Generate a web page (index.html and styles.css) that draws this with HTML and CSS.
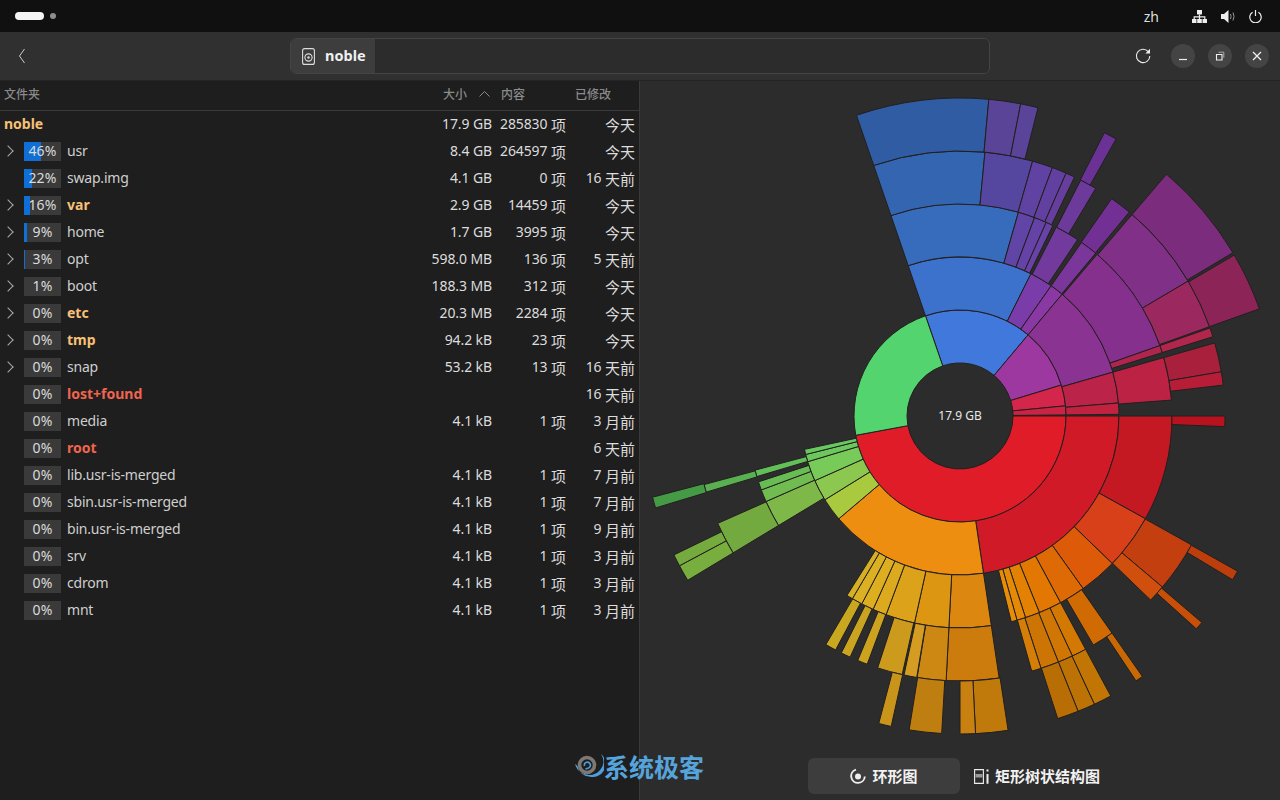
FILE: index.html
```html
<!DOCTYPE html>
<html lang="zh-CN">
<head>
    <meta charset="UTF-8">
    <title>磁盘使用情况分析器</title>
    <link rel="stylesheet" href="styles.css">
</head>
<body>
    <!-- 顶部面板 -->
    <div class="top-bar">
        <div class="workspaces">
            <span class="ws-pill"></span>
            <span class="ws-dot"></span>
        </div>
        <div class="tray">
            <span class="lang">zh</span>
            <svg class="tray-net" width="15" height="13" viewBox="0 0 15 13">
                <path d="M5 0h5v4.5H5zM0 9h4.5v4H0zM5.2 9h4.6v4H5.2zM10.5 9H15v4h-4.5z" fill="#eee"/>
                <path d="M7.5 4.5V9M2.2 9V6.8h10.6V9" fill="none" stroke="#eee" stroke-width="1.2"/>
            </svg>
            <svg class="tray-vol" width="15" height="13" viewBox="0 0 15 13">
                <path d="M0 4h3l4.5-4v13L3 9H0z" fill="#eee"/>
                <path d="M9.5 4q1.2 2.5 0 5M12 2.5q2 4 0 8" fill="none" stroke="#999" stroke-width="1"/>
            </svg>
            <svg class="tray-power" width="13" height="13" viewBox="0 0 13 13">
                <path d="M3.6 2.2a5.7 5.7 0 1 0 5.8 0M6.5 0v6" fill="none" stroke="#eee" stroke-width="1.2"/>
            </svg>
        </div>
    </div>

    <!-- 标题栏 -->
    <div class="header-bar">
        <svg class="back-icon" width="8" height="16" viewBox="0 0 8 16">
            <path d="M6.5 1 1.5 8l5 7" fill="none" stroke="#ccc" stroke-width="1"/>
        </svg>
        <div class="path-bar">
            <div class="path-btn">
                <svg width="13" height="17" viewBox="0 0 13 17">
                    <rect x=".6" y=".6" width="11.8" height="15.8" rx="2" fill="none" stroke="#ddd" stroke-width="1.1"/>
                    <circle cx="6.5" cy="9.5" r="3.6" fill="none" stroke="#ddd" stroke-width="1.1"/>
                    <circle cx="6.5" cy="9.5" r="1.2" fill="#ddd"/>
                </svg>
                <span>noble</span>
            </div>
        </div>
        <div class="header-actions">
            <svg class="refresh-icon" width="16" height="16" viewBox="0 0 16 16">
                <path d="M13.2 3.6A6.7 6.7 0 1 0 14.8 8" fill="none" stroke="#eee" stroke-width="1.1"/>
                <path d="M15 .8v4.6h-4.6z" fill="#eee"/>
            </svg>
            <div class="win-btn">
                <svg width="10" height="10" viewBox="0 0 10 10"><path d="M1 8.5h8" stroke="#eee" stroke-width="1.2"/></svg>
            </div>
            <div class="win-btn">
                <svg width="10" height="10" viewBox="0 0 10 10">
                    <path d="M1.5 3.5h5.5V9H1.5z" fill="none" stroke="#eee" stroke-width="1.1"/>
                    <path d="M3.5 1.2h5.3v5.5" fill="none" stroke="#aaa" stroke-width="1"/>
                </svg>
            </div>
            <div class="win-btn">
                <svg width="10" height="10" viewBox="0 0 10 10"><path d="M1 1l8 8M9 1l-8 8" stroke="#eee" stroke-width="1.3"/></svg>
            </div>
        </div>
    </div>

    <div class="main">
        <!-- 文件夹列表 -->
        <div class="tree-pane">
            <div class="tree-head">
                <div>文件夹</div>
                <div class="head-size">
                    <span>大小</span>
                    <svg width="11" height="6" viewBox="0 0 11 6"><path d="M.5 5.5l5-5 5 5" fill="none" stroke="#8a8a8a"/></svg>
                </div>
                <div class="head-col">内容</div>
                <div class="head-col">已修改</div>
            </div>

            <div class="tree-row">
                <div class="name-cell name-warn root-name">noble</div>
                <div class="num">17.9 GB</div><div class="num">285830 <span class="unit">项</span></div><div class="num"><span class="unit">今天</span></div>
            </div>
            <div class="tree-row">
                <div class="name-cell"><span class="arrow"></span><span class="bar"><span class="fill w46"></span><span class="pct">46%</span></span>usr</div>
                <div class="num">8.4 GB</div><div class="num">264597 <span class="unit">项</span></div><div class="num"><span class="unit">今天</span></div>
            </div>
            <div class="tree-row">
                <div class="name-cell"><span class="no-arrow"></span><span class="bar"><span class="fill w22"></span><span class="pct">22%</span></span>swap.img</div>
                <div class="num">4.1 GB</div><div class="num">0 <span class="unit">项</span></div><div class="num">16 <span class="unit">天前</span></div>
            </div>
            <div class="tree-row">
                <div class="name-cell name-warn"><span class="arrow"></span><span class="bar"><span class="fill w16"></span><span class="pct">16%</span></span>var</div>
                <div class="num">2.9 GB</div><div class="num">14459 <span class="unit">项</span></div><div class="num"><span class="unit">今天</span></div>
            </div>
            <div class="tree-row">
                <div class="name-cell"><span class="arrow"></span><span class="bar"><span class="fill w9"></span><span class="pct">9%</span></span>home</div>
                <div class="num">1.7 GB</div><div class="num">3995 <span class="unit">项</span></div><div class="num"><span class="unit">今天</span></div>
            </div>
            <div class="tree-row">
                <div class="name-cell"><span class="arrow"></span><span class="bar"><span class="fill w3"></span><span class="pct">3%</span></span>opt</div>
                <div class="num">598.0 MB</div><div class="num">136 <span class="unit">项</span></div><div class="num">5 <span class="unit">天前</span></div>
            </div>
            <div class="tree-row">
                <div class="name-cell"><span class="arrow"></span><span class="bar"><span class="pct">1%</span></span>boot</div>
                <div class="num">188.3 MB</div><div class="num">312 <span class="unit">项</span></div><div class="num"><span class="unit">今天</span></div>
            </div>
            <div class="tree-row">
                <div class="name-cell name-warn"><span class="arrow"></span><span class="bar"><span class="pct">0%</span></span>etc</div>
                <div class="num">20.3 MB</div><div class="num">2284 <span class="unit">项</span></div><div class="num"><span class="unit">今天</span></div>
            </div>
            <div class="tree-row">
                <div class="name-cell name-warn"><span class="arrow"></span><span class="bar"><span class="pct">0%</span></span>tmp</div>
                <div class="num">94.2 kB</div><div class="num">23 <span class="unit">项</span></div><div class="num"><span class="unit">今天</span></div>
            </div>
            <div class="tree-row">
                <div class="name-cell"><span class="arrow"></span><span class="bar"><span class="pct">0%</span></span>snap</div>
                <div class="num">53.2 kB</div><div class="num">13 <span class="unit">项</span></div><div class="num">16 <span class="unit">天前</span></div>
            </div>
            <div class="tree-row">
                <div class="name-cell name-error"><span class="no-arrow"></span><span class="bar"><span class="pct">0%</span></span>lost+found</div>
                <div class="num"></div><div class="num"></div><div class="num">16 <span class="unit">天前</span></div>
            </div>
            <div class="tree-row">
                <div class="name-cell"><span class="no-arrow"></span><span class="bar"><span class="pct">0%</span></span>media</div>
                <div class="num">4.1 kB</div><div class="num">1 <span class="unit">项</span></div><div class="num">3 <span class="unit">月前</span></div>
            </div>
            <div class="tree-row">
                <div class="name-cell name-error"><span class="no-arrow"></span><span class="bar"><span class="pct">0%</span></span>root</div>
                <div class="num"></div><div class="num"></div><div class="num">6 <span class="unit">天前</span></div>
            </div>
            <div class="tree-row">
                <div class="name-cell"><span class="no-arrow"></span><span class="bar"><span class="pct">0%</span></span>lib.usr-is-merged</div>
                <div class="num">4.1 kB</div><div class="num">1 <span class="unit">项</span></div><div class="num">7 <span class="unit">月前</span></div>
            </div>
            <div class="tree-row">
                <div class="name-cell"><span class="no-arrow"></span><span class="bar"><span class="pct">0%</span></span>sbin.usr-is-merged</div>
                <div class="num">4.1 kB</div><div class="num">1 <span class="unit">项</span></div><div class="num">7 <span class="unit">月前</span></div>
            </div>
            <div class="tree-row">
                <div class="name-cell"><span class="no-arrow"></span><span class="bar"><span class="pct">0%</span></span>bin.usr-is-merged</div>
                <div class="num">4.1 kB</div><div class="num">1 <span class="unit">项</span></div><div class="num">9 <span class="unit">月前</span></div>
            </div>
            <div class="tree-row">
                <div class="name-cell"><span class="no-arrow"></span><span class="bar"><span class="pct">0%</span></span>srv</div>
                <div class="num">4.1 kB</div><div class="num">1 <span class="unit">项</span></div><div class="num">3 <span class="unit">月前</span></div>
            </div>
            <div class="tree-row">
                <div class="name-cell"><span class="no-arrow"></span><span class="bar"><span class="pct">0%</span></span>cdrom</div>
                <div class="num">4.1 kB</div><div class="num">1 <span class="unit">项</span></div><div class="num">3 <span class="unit">月前</span></div>
            </div>
            <div class="tree-row">
                <div class="name-cell"><span class="no-arrow"></span><span class="bar"><span class="pct">0%</span></span>mnt</div>
                <div class="num">4.1 kB</div><div class="num">1 <span class="unit">项</span></div><div class="num">3 <span class="unit">月前</span></div>
            </div>
        </div>

        <!-- 环形图 -->
        <div class="chart-pane">
            <div class="chart-area">
                <svg id="sunburst" width="640" height="670" viewBox="640 81 640 670"></svg>
                <div class="chart-label">17.9 GB</div>
            </div>
            <div class="view-switch">
                <div class="switch-btn active">
                    <svg width="16" height="17" viewBox="0 0 16 17">
                        <path d="M6 1.6A6.8 6.8 0 1 0 14.8 8.5" fill="none" stroke="#eee" stroke-width="1.9"/>
                        <circle cx="8" cy="8.5" r="3" fill="#eee"/>
                    </svg>
                    <span>环形图</span>
                </div>
                <div class="switch-btn">
                    <svg width="15" height="15" viewBox="0 0 15 15">
                        <path d="M.6.6h8.8v13.8H.6z" fill="none" stroke="#eee" stroke-width="1.1"/>
                        <path d="M1.5 5h7v3.5h-7z" fill="#999"/>
                        <path d="M12.5.6h2v2h-2zM12.5 5h2v9.8h-2z" fill="#eee"/>
                    </svg>
                    <span>矩形树状结构图</span>
                </div>
            </div>
        </div>
    </div>

    <!-- 水印 -->
    <div class="watermark">
        <svg width="30" height="26" viewBox="0 0 30 26">
            <path d="M1 10A14.5 14.5 0 0 0 29.5 8 14.5 14.5 0 0 0 27 0 13 13 0 0 1 15 22.5 12 12 0 0 1 3.5 12Z" fill="#4c9fdc"/>
            <circle cx="13" cy="11" r="7.5" fill="none" stroke="#7f7771" stroke-width="3.6"/>
            <path d="M10.5 12a3 3 0 1 1 4 2L11.5 15" fill="none" stroke="#4c9fdc" stroke-width="1.6"/>
        </svg>
        <span>系统极客</span>
    </div>

    <script src="sunburst.js"></script>
</body>
</html>
```

FILE: styles.css
```css
* {
    box-sizing: border-box;
}

html, body {
    height: 100%;
}

body {
    margin: 0;
    overflow: hidden;
    display: flex;
    flex-direction: column;
    position: relative;
    background: #1e1e1e;
    color: #e6e6e6;
    font-family: "Noto Sans", "Noto Sans CJK SC", sans-serif;
    font-size: 14px;
}

/* 顶部面板 */
.top-bar {
    height: 32px;
    flex: none;
    background: #101010;
    display: flex;
    justify-content: space-between;
    align-items: center;
    padding: 0 18px 0 15px;
}

.workspaces {
    display: flex;
    align-items: center;
    gap: 6px;
}

.ws-pill {
    width: 29px;
    height: 8px;
    border-radius: 4px;
    background: #f5f5f5;
}

.ws-dot {
    width: 6px;
    height: 6px;
    border-radius: 50%;
    background: #8d8d8d;
}

.tray {
    display: flex;
    align-items: center;
}

.lang {
    font-size: 14px;
    color: #ddd;
    margin-right: 33px;
}

.tray-vol {
    margin-left: 14px;
}

.tray-power {
    margin-left: 13px;
}

/* 标题栏 */
.header-bar {
    height: 49px;
    flex: none;
    background: #303030;
    border-bottom: 1px solid #242424;
    display: flex;
    align-items: center;
    padding: 0 11px 0 18px;
    position: relative;
}

.back-icon {
    margin-bottom: 1px;
}

.path-bar {
    width: 700px;
    height: 36px;
    margin-left: 264px;
    background: #2c2c2c;
    border: 1px solid #444;
    border-radius: 6px;
    overflow: hidden;
}

.path-btn {
    width: 85px;
    height: 100%;
    background: #3d3d3d;
    border-right: 1px solid #2a2a2a;
    display: flex;
    align-items: center;
    gap: 10px;
    padding-left: 11px;
    font-weight: 700;
    font-size: 14.5px;
    color: #f0f0f0;
}

.path-btn span {
    padding-bottom: 2px;
}

.header-actions {
    margin-left: auto;
    display: flex;
    align-items: center;
    gap: 13px;
}

.refresh-icon {
    margin-right: 7px;
}

.win-btn {
    width: 24px;
    height: 24px;
    border-radius: 50%;
    background: #444;
    display: flex;
    align-items: center;
    justify-content: center;
}

/* 主体 */
.main {
    flex: 1;
    display: flex;
    min-height: 0;
}

.tree-pane {
    width: 640px;
    flex: none;
    background: #1e1e1e;
    border-right: 1px solid #3a3a3a;
}

.tree-head,
.tree-row {
    display: grid;
    grid-template-columns: 1fr 82px 74px 69px;
    padding-right: 4px;
}

.tree-head {
    height: 30px;
    align-items: center;
    border-bottom: 1px solid #3a3a3a;
    padding-left: 4px;
    padding-bottom: 3px;
    font-size: 12px;
    font-weight: 500;
    color: #8a8a8a;
}

.head-size {
    display: flex;
    align-items: center;
    justify-content: flex-end;
    gap: 12px;
    padding-right: 2px;
}

.head-col {
    padding-left: 9px;
}

.tree-row {
    height: 27px;
    align-items: center;
    font-size: 14px;
}

.num {
    height: 20px;
    line-height: 20px;
    text-align: right;
    color: #dcdcdc;
    white-space: nowrap;
    letter-spacing: -0.1px;
    margin-bottom: 2px;
}

.unit {
    font-size: 15px;
    line-height: 15px;
    letter-spacing: 0;
    vertical-align: -2px;
}

.name-cell {
    display: flex;
    align-items: center;
    color: #cfcfcf;
    letter-spacing: -0.2px;
    padding-bottom: 2px;
}

.root-name {
    padding-left: 4px;
}

.name-warn {
    color: #f8c077;
    font-weight: 700;
    letter-spacing: 0;
}

.name-error {
    color: #f0654f;
    font-weight: 700;
    letter-spacing: 0;
}

.arrow,
.no-arrow {
    width: 24px;
    flex: none;
    height: 10px;
    position: relative;
}

.arrow::after {
    content: '';
    position: absolute;
    left: 4px;
    top: 1px;
    width: 7px;
    height: 7px;
    border-top: 1px solid #aaa;
    border-right: 1px solid #aaa;
    transform: rotate(45deg);
}

.bar {
    width: 37px;
    height: 19px;
    flex: none;
    margin-right: 6px;
    margin-bottom: -2px;
    background: #3a3a3a;
    position: relative;
    display: flex;
    align-items: center;
    justify-content: center;
}

.fill {
    position: absolute;
    left: 0;
    top: 0;
    bottom: 0;
    background: #0f6fd6;
}

.w46 { width: 17px; }
.w22 { width: 8px; }
.w16 { width: 6px; }
.w9 { width: 3px; }
.w3 { width: 1px; }

.pct {
    position: relative;
    top: -1px;
    color: #dadada;
    font-size: 14px;
    font-weight: 400;
    letter-spacing: 0.2px;
}

/* 右侧图表 */
.chart-pane {
    flex: 1;
    background: #2c2c2c;
    display: flex;
    flex-direction: column;
    min-width: 0;
}

.chart-area {
    height: 670px;
    flex: none;
    position: relative;
}

#sunburst {
    display: block;
}

.chart-label {
    position: absolute;
    left: 320px;
    top: 334px;
    transform: translate(-50%, -50%);
    font-size: 12px;
    color: #e8e8e8;
}

.view-switch {
    display: flex;
    padding: 7px 0 0 168px;
}

.switch-btn {
    height: 36px;
    display: flex;
    align-items: center;
    gap: 6px;
    padding: 0 14px;
    border-radius: 6px;
    font-weight: 700;
    font-size: 15px;
    color: #f2f2f2;
}

.switch-btn span {
    padding-bottom: 2px;
}

.switch-btn.active {
    width: 152px;
    justify-content: center;
    background: #3d3d3d;
}

/* 水印 */
.watermark {
    position: absolute;
    left: 574px;
    top: 753px;
    display: flex;
    align-items: center;
    color: #56a4dc;
    font-weight: 700;
    font-size: 25px;
    line-height: 28px;
}
```

FILE: sunburst.js
```js
// 环形图数据: [层, 起始角, 结束角, 颜色], 角度从正上方顺时针
const CX = 960;
const CY = 416;
const RING = 53;

const segments = [
    // 第一层
    [1, -19, 40, '#4078dc'], [1, 40, 73, '#9c38a0'], [1, 73, 84.5, '#d4254a'],
    [1, 84.5, 89.4, '#cc2244'], [1, 90, 259.5, '#e01c28'], [1, 259.5, 341, '#54d46e'],
    // 第二层
    [2, -19, 26.5, '#3c72cc'], [2, 26.5, 35, '#7a3ca8'], [2, 35, 40, '#8a38a4'],
    [2, 40, 74, '#8b3392'], [2, 74, 85.3, '#bc2348'], [2, 85.3, 89.4, '#c02240'],
    [2, 90, 171.5, '#d01a27'], [2, 171.5, 229.7, '#ee8e10'], [2, 229.7, 238.2, '#a9c93e'],
    [2, 238.2, 246, '#8cc850'], [2, 246, 253.3, '#78cb58'], [2, 253.3, 256, '#6cc85c'],
    [2, 256, 257.9, '#68c860'],
    // 第三层
    [3, -19, 16, '#376bbb'], [3, 16, 20.6, '#6044a6'], [3, 20.6, 24, '#6442a6'],
    [3, 24, 26, '#6842a6'], [3, 27, 33.7, '#733a9e'], [3, 35, 39.8, '#7a369a'],
    [3, 40.3, 70.6, '#84308c'], [3, 70.6, 72.6, '#b02450'], [3, 74, 85.7, '#bc2244'],
    [3, 90, 119, '#c41823'], [3, 119, 134.1, '#d8401a'], [3, 134.1, 144.5, '#dc5a08'],
    [3, 144.5, 151.7, '#de6a05'], [3, 151.7, 158, '#e27802'], [3, 158, 162, '#e38202'],
    [3, 162, 164.4, '#e48a06'], [3, 164.4, 166, '#e68e08'], [3, 171.5, 183, '#dc8810'],
    [3, 183, 192.4, '#dc9612'], [3, 192.4, 200.4, '#dca21a'], [3, 200.4, 204.2, '#dcaa1e'],
    [3, 204.2, 207.6, '#dcae20'], [3, 207.6, 210.5, '#dbb022'], [3, 210.5, 212.2, '#d6b024'],
    [3, 238.9, 246.2, '#7eb848'], [3, 246.2, 249.6, '#70bc50'], [3, 249.6, 251.9, '#68bc54'],
    [3, 253.4, 255.2, '#62bf58'],
    // 第四层
    [4, -19, 5.4, '#3365b0'], [4, 5.4, 15.9, '#5546a0'], [4, 15.9, 20.4, '#5f42a2'],
    [4, 20.4, 23.6, '#6240a0'], [4, 23.6, 25.6, '#663e9e'], [4, 27.1, 30.8, '#6c3a9a'],
    [4, 34.9, 39.7, '#733094'], [4, 40.5, 59.4, '#813088'], [4, 59.4, 70.3, '#9c2860'],
    [4, 70.6, 72.6, '#b0264c'], [4, 74, 80.4, '#a8203c'], [4, 80.4, 83.3, '#b81d38'],
    [4, 90, 92.3, '#b8121e'], [4, 119.1, 130.2, '#c43f10'], [4, 130.2, 134, '#d04f0c'],
    [4, 145, 149.8, '#d06a02'], [4, 151.7, 154.9, '#d47804'], [4, 154.9, 158.2, '#d07604'],
    [4, 158.2, 162.2, '#cc7404'], [4, 162.2, 164.3, '#d47e08'], [4, 171.5, 183, '#cc7c0c'],
    [4, 183, 189.3, '#cc8812'], [4, 189.4, 192.2, '#d49c20'], [4, 192.6, 198.1, '#cc9a1c'],
    [4, 200.5, 202.7, '#cca21e'], [4, 204.5, 206.6, '#caa420'], [4, 208, 210.4, '#c9a820'],
    [4, 238.9, 246.1, '#72aa40'], [4, 253.3, 255, '#58b050'],
    // 第五层
    [5, -19, 5.2, '#2f5ca2'], [5, 5.2, 11, '#5a4498'], [5, 11, 14.2, '#5a449a'],
    [5, 27, 29.4, '#693294'], [5, 40.5, 59.1, '#7c2c7c'], [5, 59.6, 70.3, '#8c2458'],
    [5, 119.2, 121, '#bc3e0c'], [5, 130.5, 132, '#c84f08'], [5, 145, 146.4, '#c86804'],
    [5, 151.7, 155, '#c07504'], [5, 155, 158.2, '#bc7205'], [5, 158.2, 162.1, '#b86e05'],
    [5, 171.3, 177.2, '#c07a0c'], [5, 177.2, 180, '#c88010'], [5, 183.3, 189.2, '#bf7e10'],
    [5, 192.5, 194.8, '#c8941a'], [5, 238.9, 241.9, '#78ae3e'], [5, 241.9, 244.1, '#74aa3e'],
    [5, 253.2, 255.2, '#459a45']
];

function point(r, deg) {
    const a = deg * Math.PI / 180;
    return `${(CX + r * Math.sin(a)).toFixed(2)} ${(CY - r * Math.cos(a)).toFixed(2)}`;
}

function arcPath(ring, start, end) {
    const r0 = RING * ring;
    const r1 = RING * (ring + 1);
    const large = end - start > 180 ? 1 : 0;
    return `M${point(r0, start)}A${r0} ${r0} 0 ${large} 1 ${point(r0, end)}` +
        `L${point(r1, end)}A${r1} ${r1} 0 ${large} 0 ${point(r1, start)}Z`;
}

const svg = document.getElementById('sunburst');
segments.forEach(([ring, start, end, color]) => {
    const path = document.createElementNS('http://www.w3.org/2000/svg', 'path');
    path.setAttribute('d', arcPath(ring, start, end));
    path.setAttribute('fill', color);
    path.setAttribute('stroke', '#231f1f');
    path.setAttribute('stroke-width', '1');
    svg.appendChild(path);
});
```
